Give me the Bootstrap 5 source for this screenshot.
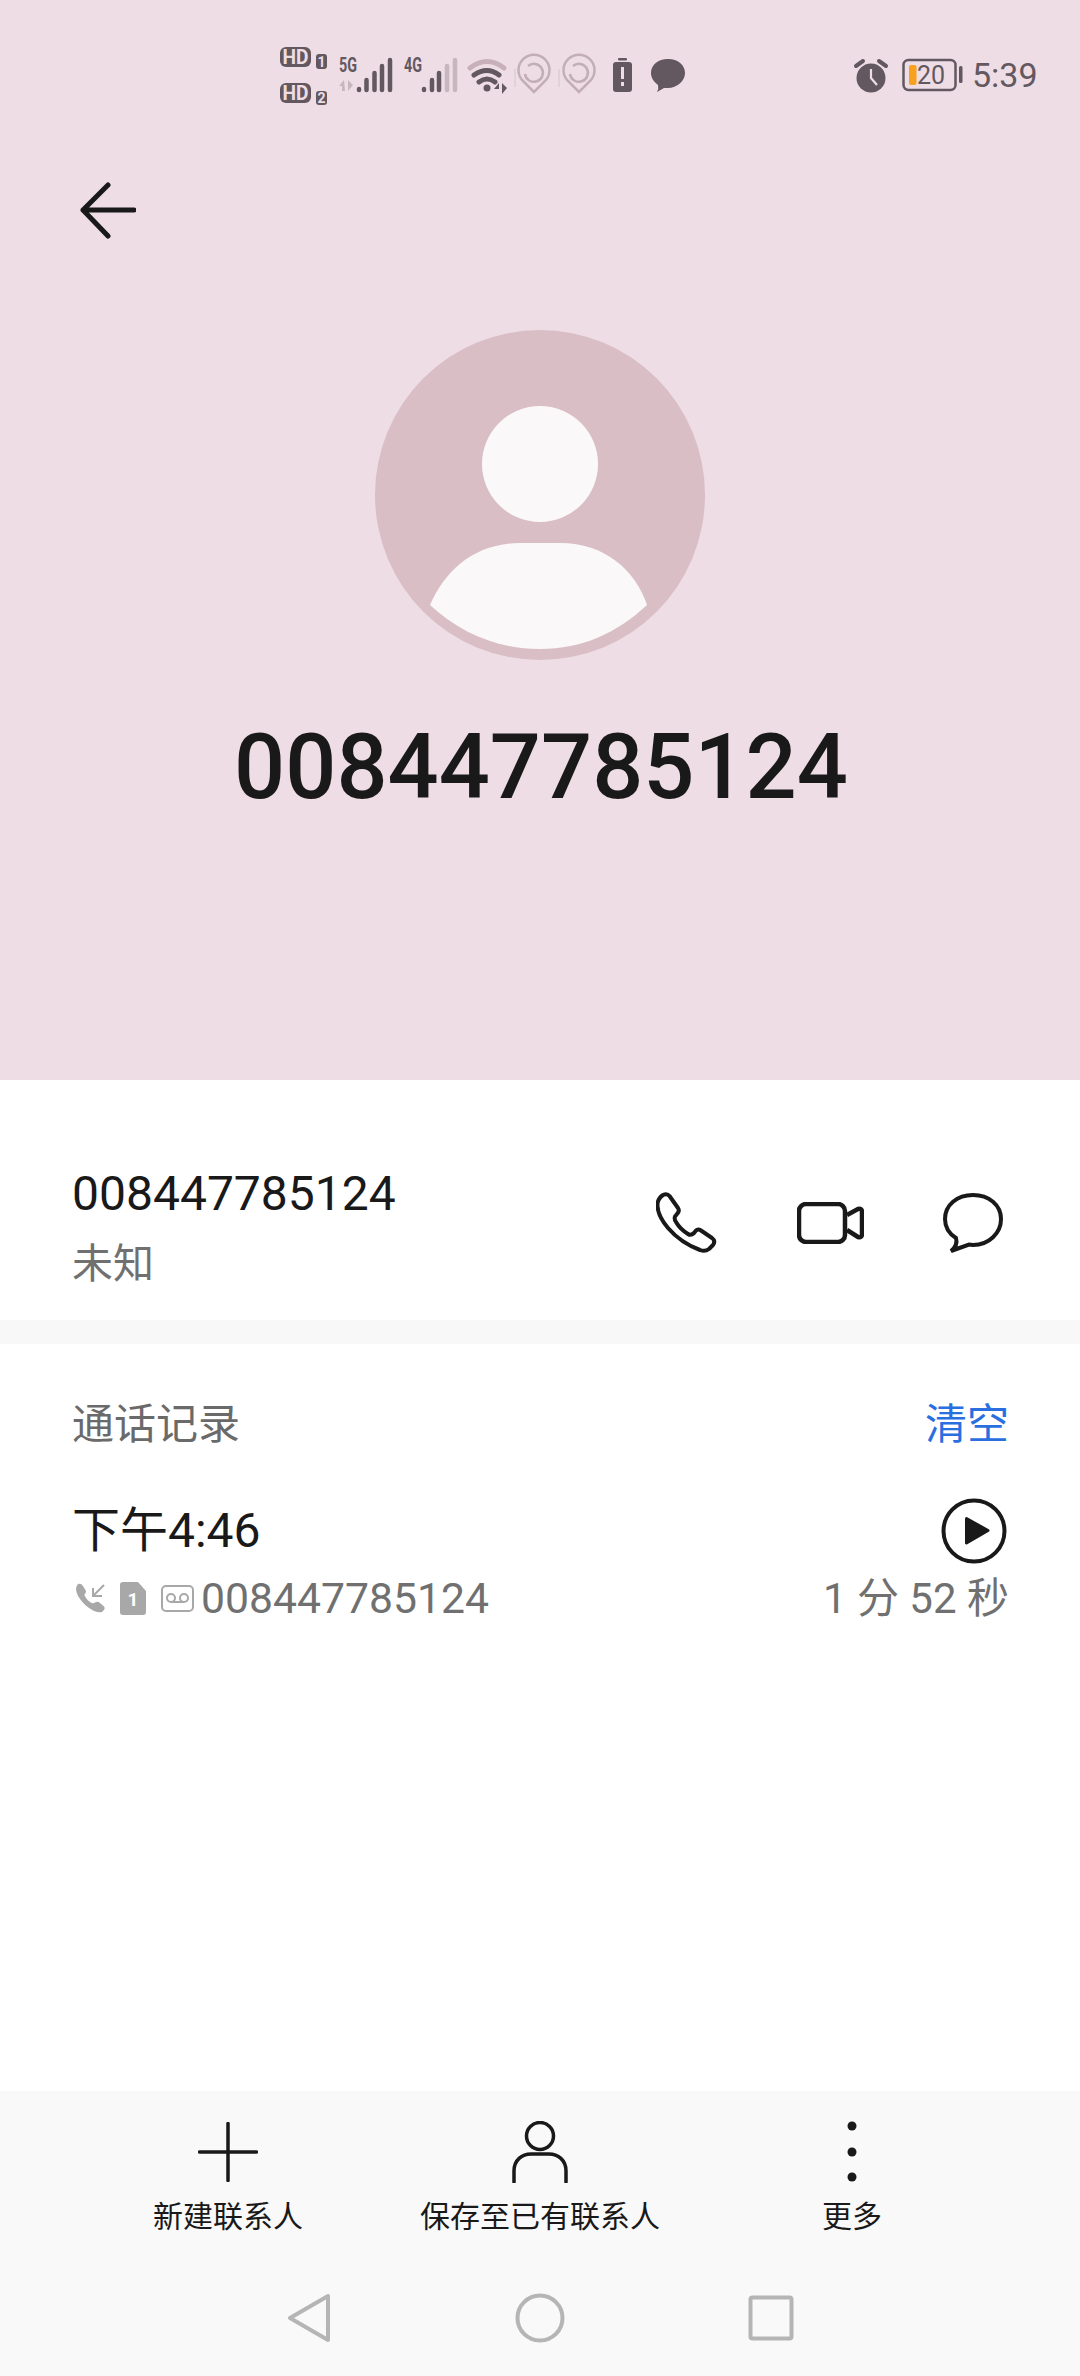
<!DOCTYPE html>
<html lang="zh-CN">
<head>
    <meta charset="UTF-8">
    <meta content="width=device-width, initial-scale=1.0" name="viewport">
    <title>008447785124</title>
    <link href="https://cdn.jsdelivr.net/npm/bootstrap@5.3.0/dist/css/bootstrap.min.css" rel="stylesheet">
    <style>
        body { width: 1080px; height: 2376px; font-family: Roboto, "Noto Sans CJK SC", sans-serif; background: #fff; color: #191919; overflow: hidden; }
        svg { display: block; flex: none; }
        .page-shell { height: 2376px; }
        .hero { height: 1080px; background: #eedde5; }
        .status-strip { height: 150px; padding-left: 260px; }
        .status-time { font-size: 34px; color: #63585f; line-height: 1; margin-left: 8px; }
        .status-right { margin-left: 153px; }
        .batt-glyph { margin-left: 13px; }
        .back-row { margin-top: 30px; padding-left: 80px; height: 60px; }
        .avatar-wrap { margin-top: 90px; }
        .big-number { margin-top: 63px; padding-left: 2px; font-size: 90px; line-height: 1; font-weight: 500; }
        .info-row { height: 240px; padding: 46px 77px 0 72px; }
        .info-number { font-size: 48px; line-height: 56px; }
        .info-label { font-size: 41px; line-height: 32px; color: #707070; margin-top: 26px; }
        .info-actions { gap: 79px; }
        .band { height: 24px; background: #f8f8f8; }
        .calls { padding: 0 71px 0 72px; flex: 1; }
        .calls-head { height: 160px; font-size: 42px; color: #6a6a6a; }
        .clear-link { color: #2a6fe0; }
        .call-top { margin-top: -6px; height: 66px; font-size: 48px; }
        .play-glyph { margin-right: 2px; }
        .call-sub { height: 64px; margin-top: 2px; font-size: 42.700px; color: #707070; }
        .call-length { font-size: 42px; }
        .call-icons { gap: 15px; margin-right: 7px; margin-left: 3px; }
        .foot { height: 285px; background: #f9f9f9; }
        .foot-actions { padding: 30px 72px 0; }
        .foot-item { width: 312px; font-size: 30px; line-height: 36px; }
        .foot-glyph { height: 62px; margin-bottom: 16px; }
        .foot-nav { margin-top: 58px; }
        .nav-cell { width: 231px; }
    </style>
</head>
<body>
<div class="page-shell d-flex flex-column">

    <div class="hero d-flex flex-column">
        <div class="status-strip d-flex align-items-center">
            <!-- network / notification icons -->
            <svg width="440" height="90" viewBox="0 0 440 90">
                <g fill="#63585f">
                    <rect x="20" y="17" width="31" height="20" rx="6"/>
                    <rect x="20" y="53" width="31" height="20" rx="6"/>
                    <rect x="56" y="24" width="11" height="15" rx="3"/>
                    <rect x="56" y="61" width="11" height="14" rx="3"/>
                </g>
                <g font-family="Roboto, sans-serif" font-weight="700" text-anchor="middle" fill="#eedde5">
                    <text x="35.500" y="33.500" font-size="20" textLength="26" lengthAdjust="spacingAndGlyphs">HD</text>
                    <text x="35.500" y="69.500" font-size="20" textLength="26" lengthAdjust="spacingAndGlyphs">HD</text>
                    <text x="61.500" y="36.500" font-size="14">1</text>
                    <text x="61.500" y="73" font-size="14">2</text>
                </g>
                <g font-family="Roboto, sans-serif" font-weight="700" fill="#63585f" font-size="20">
                    <text x="79" y="42" textLength="18" lengthAdjust="spacingAndGlyphs">5G</text>
                    <text x="144" y="42" textLength="18" lengthAdjust="spacingAndGlyphs">4G</text>
                </g>
                <g stroke="#63585f" stroke-width="4.500" stroke-linecap="round" fill="none">
                    <path d="M99 59v1M106.500 50v10M114.500 43v17M122 36v24M130 30v30"/>
                    <path d="M164 59v1M172 50v10M179 43v17"/>
                    <path d="M187 36v24M195 30v30" stroke="#c7b6bd"/>
                </g>
                <path d="M84 50l-5 6h3v5h3zM88 50v11l5-6z" fill="#c7b6bd"/>
                <g fill="none" stroke-linecap="round" stroke-width="5">
                    <path d="M210 38q17-13 34 0" stroke="#c7b0ba"/>
                    <path d="M214 45q13-9 25 0M219 52q8-6 16 0" stroke="#63585f"/>
                </g>
                <circle cx="227" cy="58" r="3.500" fill="#63585f"/>
                <path d="M239 53l-5 6h5zM242 53v11l5-6z" fill="#63585f"/>
                <path d="M255 39v18M299 39v18" stroke="#c3aeb6" opacity=".5"/>
                <g fill="none" stroke="#c3aeb6" stroke-width="2.500">
                    <path d="M274 62L262 50A15.500 15.500 0 1 1 286 50Z"/>
                    <path d="M319 62L307 50A15.500 15.500 0 1 1 331 50Z"/>
                    <path d="M268 36A9 9 0 1 1 265 44"/>
                    <path d="M313 36A9 9 0 1 1 310 44"/>
                </g>
                <rect x="358" y="28" width="9" height="2.500" rx="1" fill="#63585f"/>
                <rect x="353" y="32" width="19" height="30" rx="3" fill="#63585f"/>
                <path d="M362.500 37v12" stroke="#eedde5" stroke-width="3"/>
                <rect x="361" y="52" width="3" height="4" fill="#eedde5"/>
                <path d="M408 29c10 0 17 6 17 14s-8 15-17 15l-4 0-7 4q2-3 1-7c-4-3-7-7-7-12 0-8 7-14 17-14z" fill="#63585f"/>
            </svg>
            <div class="status-right d-flex align-items-center">
                <svg width="36" height="36" viewBox="0 0 36 36">
                    <circle cx="18" cy="21" r="14.500" fill="#63585f"/>
                    <path d="M18 12v9l6 7" stroke="#eedde5" stroke-width="2.200" fill="none"/>
                    <path d="M3 9l7-5M33 9l-7-5" stroke="#63585f" stroke-width="4" stroke-linecap="round"/>
                </svg>
                <svg width="62" height="34" viewBox="0 0 62 34" class="batt-glyph">
                    <rect x="1.500" y="2" width="52" height="30" rx="5" fill="none" stroke="#63585f" stroke-width="2.500"/>
                    <rect x="7" y="7" width="7.500" height="20" rx="2" fill="#f7a11f"/>
                    <rect x="57" y="8" width="3.500" height="17" rx="1.500" fill="#63585f"/>
                    <text x="29" y="26" text-anchor="middle" font-family="Roboto, sans-serif" font-size="25" fill="#63585f">20</text>
                </svg>
                <span class="status-time">5:39</span>
            </div>
        </div>

        <div class="back-row">
            <svg width="56" height="60" viewBox="0 0 56 60">
                <path d="M28 5L3 30l25 26M3 30h51" fill="none" stroke="#191919" stroke-width="5" stroke-linecap="round" stroke-linejoin="round"/>
            </svg>
        </div>

        <div class="avatar-wrap d-flex justify-content-center">
            <svg width="330" height="330" viewBox="0 0 330 330">
                <circle cx="165" cy="165" r="165" fill="#d9bec6"/>
                <circle cx="165" cy="134" r="58" fill="#faf8f9"/>
                <path d="M55 275C70 240 100 213 145 213h40c45 0 75 27 87 62-30 28-65 44-107 44-42 0-80-16-110-44z" fill="#faf8f9"/>
            </svg>
        </div>

        <div class="big-number text-center">008447785124</div>
    </div>

    <div class="info-row d-flex align-items-center justify-content-between">
        <div>
            <div class="info-number">008447785124</div>
            <div class="info-label">未知</div>
        </div>
        <div class="info-actions d-flex align-items-center">
            <svg width="62" height="62" viewBox="0 0 62 62">
                <path d="M7 3Q11 1 13.500 4L22 16Q24 19 21 22L19 24.500Q18 27 20 30Q24 37 32 42Q35 44 38 41L40 38.500Q42 36.500 45 38.500L56 46Q60 49 57 53L53 57Q49 60 44 58Q25 51 12 36Q2 24 1.500 14Q1 7 7 3Z" fill="none" stroke="#191919" stroke-width="4" stroke-linejoin="round"/>
            </svg>
            <svg width="67" height="42" viewBox="0 0 67 42">
                <rect x="2" y="2" width="46" height="38" rx="7" fill="none" stroke="#191919" stroke-width="4.500"/>
                <path d="M50 13L61 7Q65 6 65 10V32Q65 36 61 35L50 28" fill="none" stroke="#191919" stroke-width="4.500" stroke-linejoin="round"/>
            </svg>
            <svg width="60" height="60" viewBox="0 0 60 60">
                <path d="M13 45C5 40 2 33 2 26 2 12 14 2 30 2 46 2 58 12 58 26 58 40 46 52 30 52L26 51.500 8 58C13 54 14.500 50 13 45Z" fill="none" stroke="#191919" stroke-width="4" stroke-linejoin="miter"/>
            </svg>
        </div>
    </div>

    <div class="band"></div>

    <div class="calls">
        <div class="calls-head d-flex align-items-center justify-content-between">
            <span>通话记录</span>
            <span class="clear-link">清空</span>
        </div>
        <div class="call-top d-flex align-items-center justify-content-between">
            <span>下午4:46</span>
            <svg class="play-glyph" width="66" height="66" viewBox="0 0 66 66">
                <circle cx="33" cy="33" r="30.500" fill="none" stroke="#191919" stroke-width="4"/>
                <path d="M25.500 20.500L47 32.500 25.500 45Z" fill="#191919" stroke="#191919" stroke-width="3" stroke-linejoin="round"/>
            </svg>
        </div>
        <div class="call-sub d-flex align-items-center justify-content-between">
            <div class="d-flex align-items-center">
                <div class="call-icons d-flex align-items-center">
                    <svg width="30" height="30" viewBox="0 0 30 30">
                        <path d="M3 1Q6 0 8 3L11 8Q11 10 9.500 11.500Q9 13 13 17.500Q17 21 19 20L21 19Q23 18 25 20L29 23.500Q31 26 27 29Q24 30 19 28Q9 23 3 13Q-1 5 3 1Z" fill="#a8a8a8"/>
                        <path d="M29 2L18 13M18 5v8h9" fill="none" stroke="#a8a8a8" stroke-width="2"/>
                    </svg>
                    <svg width="26" height="33" viewBox="0 0 26 33">
                        <path d="M3 0H18L26 9V30Q26 33 23 33H3Q0 33 0 30V3Q0 0 3 0Z" fill="#a8a8a8"/>
                        <text x="13" y="24" text-anchor="middle" font-family="Roboto, sans-serif" font-size="19" font-weight="700" fill="#fff">1</text>
                    </svg>
                    <svg width="33" height="27" viewBox="0 0 33 27">
                        <rect x="1" y="1" width="31" height="25" rx="4" fill="none" stroke="#a8a8a8" stroke-width="2"/>
                        <circle cx="10" cy="13" r="4" fill="none" stroke="#a8a8a8" stroke-width="2"/>
                        <circle cx="23" cy="13" r="4" fill="none" stroke="#a8a8a8" stroke-width="2"/>
                        <path d="M10 17h13" stroke="#a8a8a8" stroke-width="2"/>
                    </svg>
                </div>
                <span>008447785124</span>
            </div>
            <span class="call-length">1 分 52 秒</span>
        </div>
    </div>

    <div class="foot">
        <div class="foot-actions d-flex">
            <div class="foot-item d-flex flex-column align-items-center">
                <div class="foot-glyph d-flex align-items-center">
                    <svg width="60" height="60" viewBox="0 0 60 60">
                        <path d="M30 1.500v57M1.500 30h57" stroke="#191919" stroke-width="3.500" stroke-linecap="round"/>
                    </svg>
                </div>
                <span>新建联系人</span>
            </div>
            <div class="foot-item d-flex flex-column align-items-center">
                <div class="foot-glyph d-flex align-items-center">
                    <svg width="56" height="62" viewBox="0 0 56 62">
                        <circle cx="28" cy="15" r="13.500" fill="none" stroke="#191919" stroke-width="3.500"/>
                        <path d="M2 61V50C2 39 10 33 19 33H37C46 33 54 39 54 50V61" fill="none" stroke="#191919" stroke-width="3.500" stroke-linecap="round"/>
                    </svg>
                </div>
                <span>保存至已有联系人</span>
            </div>
            <div class="foot-item d-flex flex-column align-items-center">
                <div class="foot-glyph d-flex align-items-center">
                    <svg width="12" height="62" viewBox="0 0 12 62">
                        <circle cx="6" cy="5" r="4.500" fill="#191919"/>
                        <circle cx="6" cy="31" r="4.500" fill="#191919"/>
                        <circle cx="6" cy="56" r="4.500" fill="#191919"/>
                    </svg>
                </div>
                <span>更多</span>
            </div>
        </div>
        <div class="foot-nav d-flex justify-content-center align-items-center">
            <div class="nav-cell d-flex justify-content-center">
                <svg width="44" height="50" viewBox="0 0 44 50">
                    <path d="M41 3V47L3 25Z" fill="none" stroke="#b5b5b5" stroke-width="4" stroke-linejoin="round"/>
                </svg>
            </div>
            <div class="nav-cell d-flex justify-content-center">
                <svg width="50" height="50" viewBox="0 0 50 50">
                    <circle cx="25" cy="25" r="22.500" fill="none" stroke="#b5b5b5" stroke-width="4"/>
                </svg>
            </div>
            <div class="nav-cell d-flex justify-content-center">
                <svg width="46" height="46" viewBox="0 0 46 46">
                    <rect x="2.500" y="2.500" width="41" height="41" rx="2" fill="none" stroke="#b5b5b5" stroke-width="4"/>
                </svg>
            </div>
        </div>
    </div>
</div>
<script src="https://cdn.jsdelivr.net/npm/bootstrap@5.3.0/dist/js/bootstrap.bundle.min.js"></script>
</body>
</html>
